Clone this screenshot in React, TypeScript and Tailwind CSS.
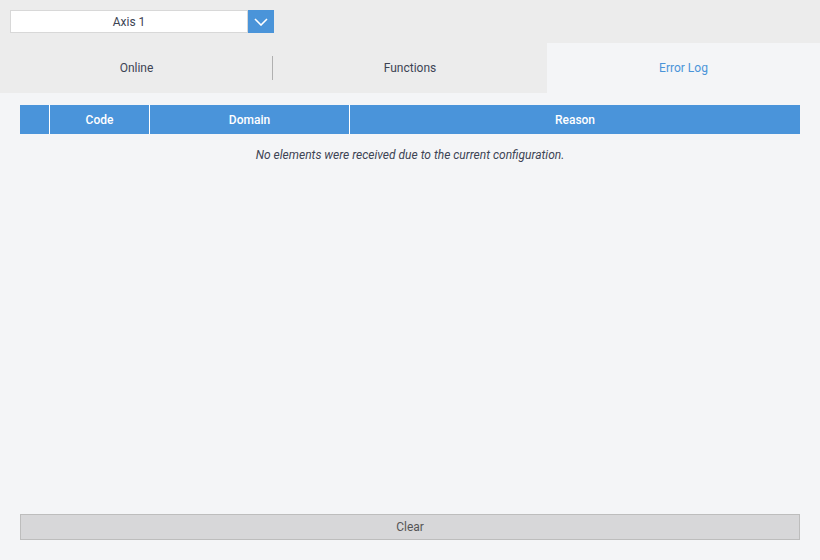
export default function App() {
  return (
    <div className="w-[820px] h-[560px] flex flex-col bg-[#f4f5f7] text-[#3d4454] text-[12px]" style={{ fontFamily: "Roboto, 'Liberation Sans', sans-serif" }}>
      <div className="bg-[#ececec] h-[43px] pt-[10px] pl-[10px]">
        <div className="flex h-[23px] w-[264px]">
          <div className="flex-1 bg-white border border-[#d8d8d8] flex items-center justify-center">Axis 1</div>
          <div className="w-[26px] bg-[#4a94d9] flex items-center justify-center">
            <svg width="14" height="8" viewBox="0 0 14 8"><path d="M1 1l6 6 6-6" stroke="white" strokeWidth="1.6" fill="none" /></svg>
          </div>
        </div>
      </div>
      <div className="flex h-[50px] bg-[#ececec]">
        <div className="w-[273px] flex items-center justify-center relative">Online<div className="absolute right-0 top-[13px] h-[24px] w-px bg-[#b0b0b0]" /></div>
        <div className="w-[274px] flex items-center justify-center">Functions</div>
        <div className="flex-1 flex items-center justify-center bg-[#f4f5f7] text-[#4a94d9]">Error Log</div>
      </div>
      <div className="flex-1 flex flex-col px-[20px] pt-[12px] pb-[20px]">
        <div className="flex h-[29px] bg-[#4a94da] text-white font-medium">
          <div className="w-[30px] border-r border-white" />
          <div className="w-[100px] border-r border-white flex items-center justify-center">Code</div>
          <div className="w-[200px] border-r border-white flex items-center justify-center">Domain</div>
          <div className="flex-1 flex items-center justify-center">Reason</div>
        </div>
        <div className="text-center italic mt-[12px]">No elements were received due to the current configuration.</div>
        <div className="flex-1" />
        <div className="h-[26px] bg-[#d7d7d9] border border-[#bdbdbd] flex items-center justify-center text-[#555]">Clear</div>
      </div>
    </div>
  );
}
